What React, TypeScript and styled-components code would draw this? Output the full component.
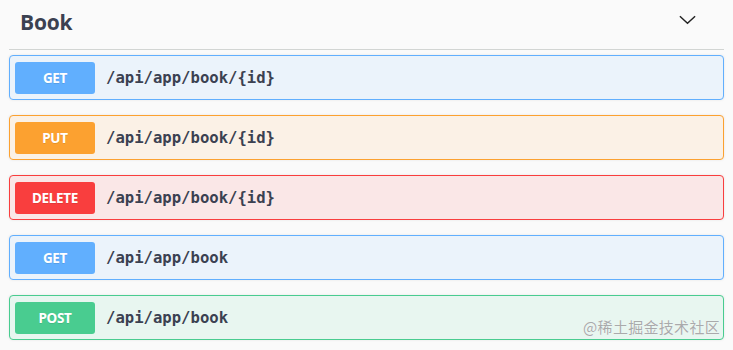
import { FC } from "react";
import styled, { createGlobalStyle } from "styled-components";

const GlobalStyle = createGlobalStyle`
  html, body {
    margin: 0;
    padding: 0;
    background: #fafafa;
  }
  body {
    font-family: "Open Sans", "Noto Sans", sans-serif;
    color: #3b4151;
  }
`;

type Method = "GET" | "PUT" | "DELETE" | "POST";

const methodColors: Record<Method, { main: string; bg: string }> = {
  GET: { main: "#61affe", bg: "#ebf3fb" },
  PUT: { main: "#fca130", bg: "#fbf1e6" },
  DELETE: { main: "#f93e3e", bg: "#fae7e7" },
  POST: { main: "#49cc90", bg: "#e8f6f0" }
};

const Page = styled.div`
  position: relative;
  width: 733px;
  height: 350px;
  padding: 0 9px;
  box-sizing: border-box;
`;

const TagHeader = styled.div`
  display: flex;
  align-items: center;
  justify-content: space-between;
  height: 50px;
  padding: 0 27px 6px 11px;
  box-sizing: border-box;
  border-bottom: 1px solid #d2d5d3;
  margin-bottom: 5px;
`;

const TagTitle = styled.h3`
  margin: 0;
  font-size: 21px;
  font-weight: 700;
  color: #3b4151;
  letter-spacing: -0.2px;
`;

const Chevron = styled.svg`
  width: 19px;
  height: 19px;
  margin-top: -4px;
`;

const OpList = styled.div`
  display: flex;
  flex-direction: column;
  gap: 15px;
`;

const OpBlock = styled.div<{ $method: Method }>`
  display: flex;
  align-items: center;
  height: 45px;
  box-sizing: border-box;
  padding: 0 5px;
  border: 1px solid ${p => methodColors[p.$method].main};
  border-radius: 4px;
  background: ${p => methodColors[p.$method].bg};
  box-shadow: 0 0 3px rgba(0, 0, 0, 0.08);
`;

const MethodBadge = styled.span<{ $method: Method }>`
  min-width: 80px;
  height: 32px;
  display: flex;
  align-items: center;
  justify-content: center;
  border-radius: 3px;
  background: ${p => methodColors[p.$method].main};
  color: #fff;
  font-family: "Noto Sans", "Open Sans", sans-serif;
  font-size: 13.5px;
  font-weight: 700;
  letter-spacing: -0.3px;
  text-shadow: 0 1px 0 rgba(0, 0, 0, 0.1);
`;

const OpPath = styled.span`
  padding: 0 11px;
  font-family: "DejaVu Sans Mono", "Liberation Mono", monospace;
  font-size: 15.6px;
  font-weight: 700;
  color: #3b4151;
`;

const Watermark = styled.div`
  position: absolute;
  right: 13px;
  bottom: 13px;
  font-family: "Noto Sans CJK SC", "Noto Sans", sans-serif;
  font-size: 15px;
  letter-spacing: 0.3px;
  color: #a9aaab;
  text-shadow: 0 0 1px #fff;
`;

const ops: { method: Method; path: string }[] = [
  { method: "GET", path: "/api/app/book/{id}" },
  { method: "PUT", path: "/api/app/book/{id}" },
  { method: "DELETE", path: "/api/app/book/{id}" },
  { method: "GET", path: "/api/app/book" },
  { method: "POST", path: "/api/app/book" }
];

const App: FC = () => (
  <>
    <GlobalStyle />
    <Page>
      <TagHeader>
        <TagTitle>Book</TagTitle>
        <Chevron viewBox="0 0 20 20">
          <path d="M2 6.5 L10 14 L18 6.5" fill="none" stroke="#222" strokeWidth="1.5" />
        </Chevron>
      </TagHeader>
      <OpList>
        {ops.map((op, i) => (
          <OpBlock key={i} $method={op.method}>
            <MethodBadge $method={op.method}>{op.method}</MethodBadge>
            <OpPath>{op.path}</OpPath>
          </OpBlock>
        ))}
      </OpList>
      <Watermark>@稀土掘金技术社区</Watermark>
    </Page>
  </>
);

export default App;
